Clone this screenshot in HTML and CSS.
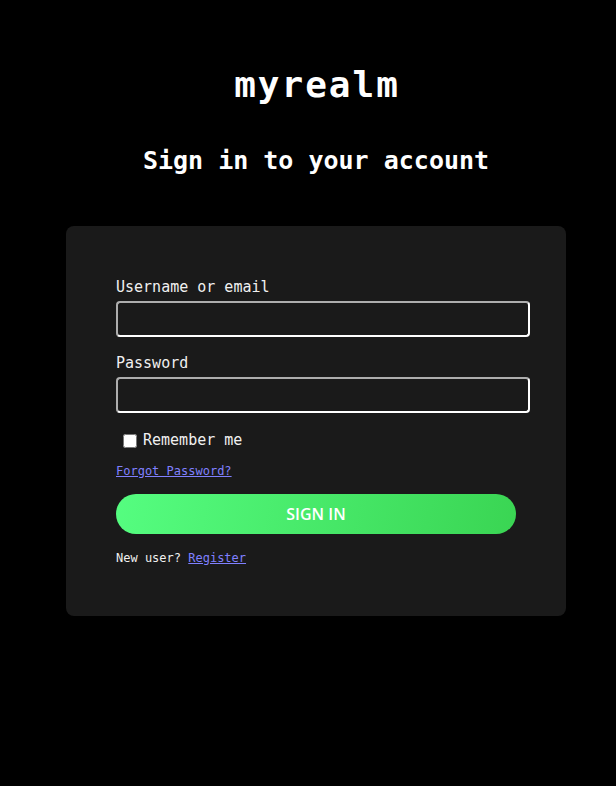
FILE: index.html
```html
<!DOCTYPE html>
<html lang="en">
<head>
<meta charset="utf-8">
<title>Sign in to myrealm</title>
<link rel="stylesheet" href="styles.css">
</head>
<body>
<main class="page">
  <header class="header">
    <h1 class="realm">myrealm</h1>
    <h2 class="title">Sign in to your account</h2>
  </header>
  <section class="card">
    <form class="form" onsubmit="return false;">
      <div class="field">
        <label class="label" for="username">Username or email</label>
        <input class="input" id="username" type="text">
      </div>
      <div class="field">
        <label class="label" for="password">Password</label>
        <input class="input" id="password" type="password">
      </div>
      <label class="remember">
        <input class="checkbox" type="checkbox">
        <span>Remember me</span>
      </label>
      <a class="link forgot" href="#">Forgot Password?</a>
      <button class="submit" type="submit">SIGN IN</button>
      <p class="register">New user? <a class="link" href="#">Register</a></p>
    </form>
  </section>
</main>
</body>
</html>
```
FILE: styles.css
```css
html, body {
  margin: 0;
  padding: 0;
  background: #000;
}

body {
  font-family: "DejaVu Sans Mono", "Liberation Mono", monospace;
  color: #f2f2f2;
}

.page {
  padding: 64px 0 0 16px;
  display: flex;
  flex-direction: column;
  align-items: center;
}

.header {
  display: flex;
  flex-direction: column;
  align-items: center;
}

.realm {
  margin: 0 -2px 0 0;
  font-size: 36px;
  line-height: 42px;
  font-weight: bold;
  letter-spacing: 2px;
  color: #fff;
}

.title {
  margin: 40px 0 0;
  font-size: 25px;
  line-height: 30px;
  font-weight: bold;
  color: #fff;
}

.card {
  margin-top: 50px;
  width: 400px;
  padding: 52px 50px 50px;
  background: #1a1a1a;
  border-radius: 8px;
}

.form {
  display: flex;
  flex-direction: column;
}

.field {
  display: flex;
  flex-direction: column;
  margin-bottom: 17px;
}

.field + .field {
  margin-bottom: 18px;
}

.label {
  font-size: 15px;
  line-height: 18px;
  margin-bottom: 5px;
  color: #f0f0f0;
}

.input {
  box-sizing: content-box;
  width: 100%;
  height: 22px;
  padding: 5px;
  margin: 0;
  border-width: 2px;
  border-style: solid;
  border-color: #adadad #ffffff #ffffff #adadad;
  border-radius: 4px;
  background: #1a1a1a;
  color: #fff;
  font-family: inherit;
  font-size: 15px;
  outline: none;
}

.remember {
  display: flex;
  align-items: center;
  font-size: 15px;
  line-height: 18px;
  color: #f0f0f0;
}

.checkbox {
  width: 14px;
  height: 14px;
  margin: 1px 6px 0 7px;
}

.link {
  color: #8080ff;
  text-decoration: underline;
}

.forgot {
  margin-top: 15px;
  font-size: 12px;
  line-height: 15px;
  align-self: flex-start;
}

.submit {
  margin-top: 15px;
  height: 40px;
  width: 100%;
  border: none;
  border-radius: 20px;
  background: linear-gradient(100deg, #55fd80 0%, #3ad553 100%);
  color: #fff;
  font-family: "Open Sans", "Noto Sans", sans-serif;
  font-weight: 600;
  font-size: 16px;
  cursor: pointer;
}

.register {
  margin: 17px 0 0;
  font-size: 12px;
  line-height: 15px;
  color: #f0f0f0;
}
```
